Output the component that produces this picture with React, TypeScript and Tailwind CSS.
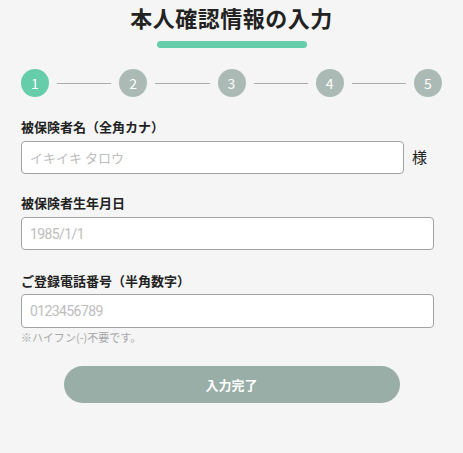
const steps = [1, 2, 3, 4, 5];

function Stepper({ current }: { current: number }) {
  return (
    <div className="mt-[21px] flex items-center">
      {steps.map((n, i) => (
        <div key={n} className={i === 0 ? "flex items-center" : "flex flex-1 items-center"}>
          {i > 0 && <div className="mx-2 h-px flex-1 bg-[#a9aeab]" />}
          <div
            className={
              "flex h-[28px] w-[28px] items-center justify-center rounded-full text-[14px] text-white " +
              (n === current ? "bg-[#66cdaa]" : "bg-[#abbab4]")
            }
          >
            {n}
          </div>
        </div>
      ))}
    </div>
  );
}

export default function App() {
  return (
    <div
      className="min-h-[453px] bg-[#f5f5f5] px-[21px] text-[#222]"
      style={{ fontFamily: '"Noto Sans CJK JP", "Noto Sans", sans-serif' }}
    >
      <h1 className="pt-[2px] text-center text-[22px] font-bold leading-[30px] tracking-[0.5px]">
        本人確認情報の入力
      </h1>
      <div className="mx-auto mt-[9px] h-[7px] w-[150px] rounded-full bg-[#66cdaa]" />

      <Stepper current={1} />

      <form className="pr-[8px]">
        <label className="mt-[20px] block text-[13px] font-bold leading-[20px]">
          被保険者名（全角カナ）
        </label>
        <div className="mt-[4px] flex items-center">
          <input
            type="text"
            placeholder="イキイキ タロウ"
            className="h-[33px] flex-1 rounded-[4px] border border-[#a3a3a3] bg-white px-[8px] text-[13px] placeholder:text-[#bdbdbd] focus:outline-none"
          />
          <span className="ml-[8px] w-[22px] text-[15px]">様</span>
        </div>

        <label className="mt-[19px] block text-[13px] font-bold leading-[20px]">
          被保険者生年月日
        </label>
        <input
          type="text"
          placeholder="1985/1/1"
          className="mt-[4px] block h-[33px] w-full rounded-[4px] border border-[#a3a3a3] bg-white px-[8px] text-[14px] tracking-[-0.6px] placeholder:text-[#bdbdbd] focus:outline-none"
          style={{ fontFamily: 'Roboto, "Liberation Sans", sans-serif' }}
        />

        <label className="mt-[21px] block text-[13px] font-bold leading-[20px]">
          ご登録電話番号（半角数字）
        </label>
        <input
          type="tel"
          placeholder="0123456789"
          className="mt-[3px] block h-[34px] w-full rounded-[4px] border border-[#a3a3a3] bg-white px-[8px] text-[14px] tracking-[-0.6px] placeholder:text-[#bdbdbd] focus:outline-none"
          style={{ fontFamily: 'Roboto, "Liberation Sans", sans-serif' }}
        />
        <p className="mt-px text-[11px] leading-[16px] text-[#a8a8a8]">※ハイフン(-)不要です。</p>
      </form>

      <button
        type="button"
        className="mx-auto mt-[21px] block h-[37px] w-[336px] rounded-full bg-[#98aea6] text-[13px] font-bold text-white"
      >
        入力完了
      </button>
    </div>
  );
}
